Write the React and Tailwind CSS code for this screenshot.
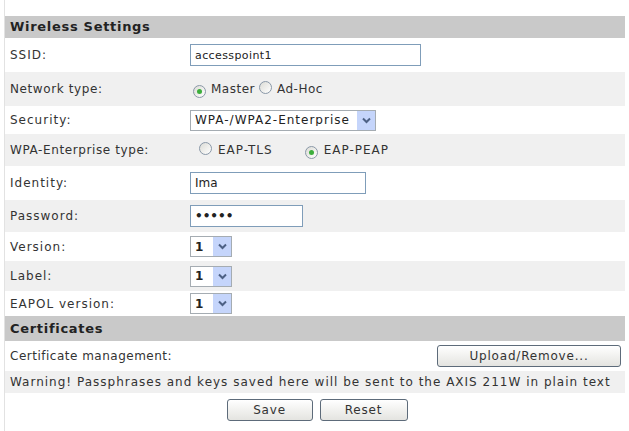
import React from "react";

const font = { fontFamily: '"DejaVu Sans", Verdana, sans-serif' };

function Radio({ checked }) {
  return (
    <span className="inline-flex items-center justify-center w-[13px] h-[13px] rounded-full border border-[#8a98a8] bg-gradient-to-br from-[#dcdcd6] to-white">
      {checked && <span className="w-[5px] h-[5px] rounded-full bg-[#3cae3c]" />}
    </span>
  );
}

function Select({ value, w, small }) {
  return (
    <div className={`flex items-center h-[21px] border border-[#a5acb2] bg-white ${w}`}>
      <span className={`flex-1 pl-[4px] text-[12px] text-[#222] leading-none whitespace-nowrap overflow-hidden ${small ? "font-bold" : "tracking-[1px]"}`}>{value}</span>
      <span className="w-[18px] h-[19px] bg-[#c5d5fb] flex items-center justify-center">
        <svg width="9" height="7" viewBox="0 0 9 7">
          <path d="M1 1.5 L4.5 5 L8 1.5" fill="none" stroke="#4d6185" strokeWidth="2" />
        </svg>
      </span>
    </div>
  );
}

function Input({ value, w, cls }) {
  return (
    <div className={`flex items-center h-[22px] border border-[#7f9db9] bg-white pl-[4px] ${w}`}>
      <span className={`text-[#222] leading-none ${cls}`}>{value}</span>
    </div>
  );
}

function Row({ label, children, gray, h, lcls = "tracking-[1px]" }) {
  return (
    <div className={`flex items-center ${h} ${gray ? "bg-[#f0f0f0]" : "bg-white"}`}>
      <div className={`w-[185px] pl-[5px] text-[12px] text-[#333] whitespace-nowrap ${lcls}`}>{label}</div>
      <div className="flex items-center">{children}</div>
    </div>
  );
}

function Btn({ children, w }) {
  return (
    <div className={`h-[22px] ${w} flex items-center justify-center rounded-[3px] border border-[#5d6b7a] bg-gradient-to-b from-white to-[#e4e4e0] text-[12px] tracking-[0.8px] text-[#333]`}>
      {children}
    </div>
  );
}

export default function App() {
  return (
    <div className="w-[629px] h-[431px] bg-white overflow-hidden" style={font}>
      <div className="ml-[4px] mr-[4px] border-l border-[#e2e2e2] pt-[16px] h-full">
        <div className="bg-[#c9c9c9] h-[22px] flex items-center pl-[5px] text-[13px] tracking-[0.7px] font-bold text-[#222]">
          Wireless Settings
        </div>
        <Row label="SSID:" h="h-[34px]">
          <Input value="accesspoint1" w="w-[231px]" cls="text-[11px] tracking-[0.4px] text-[#111]" />
        </Row>
        <Row label="Network type:" gray h="h-[34px]" lcls="text-[11px] tracking-[0.6px] text-[#222]">
          <span className="ml-[3px]"><Radio checked /></span>
          <span className="ml-[5px] text-[12px] tracking-[0.5px] text-[#333]">Master</span>
          <span className="ml-[4px]"><Radio /></span>
          <span className="ml-[5px] text-[12px] tracking-[0.5px] text-[#333]">Ad-Hoc</span>
        </Row>
        <Row label="Security:" h="h-[28px]">
          <Select value="WPA-/WPA2-Enterprise" w="w-[186px]" />
        </Row>
        <Row label="WPA-Enterprise type:" gray h="h-[32px]" lcls="tracking-[0.6px]">
          <span className="ml-[9px]"><Radio /></span>
          <span className="ml-[6px] text-[12px] tracking-[1px] text-[#333]">EAP-TLS</span>
          <span className="ml-[32px]"><Radio checked /></span>
          <span className="ml-[6px] text-[12px] tracking-[1px] text-[#333]">EAP-PEAP</span>
        </Row>
        <Row label="Identity:" h="h-[34px]">
          <Input value="Ima" w="w-[176px]" cls="text-[12px]" />
        </Row>
        <Row label="Password:" gray h="h-[32px]">
          <Input value="•••••" w="w-[113px]" cls="text-[12px] font-bold" />
        </Row>
        <Row label="Version:" h="h-[29px]">
          <Select value="1" w="w-[42px]" small />
        </Row>
        <Row label="Label:" gray h="h-[30px]">
          <Select value="1" w="w-[42px]" small />
        </Row>
        <Row label="EAPOL version:" h="h-[25px]">
          <Select value="1" w="w-[42px]" small />
        </Row>
        <div className="bg-[#c9c9c9] h-[25px] flex items-center pl-[5px] text-[13px] tracking-[0.7px] font-bold text-[#222]">
          Certificates
        </div>
        <div className="flex items-center justify-between h-[30px] pl-[5px] pr-[4px]">
          <span className="text-[12px] tracking-[0.5px] text-[#333]">Certificate management:</span>
          <Btn w="w-[184px]">Upload/Remove...</Btn>
        </div>
        <div className="flex items-center h-[22px] pl-[5px] bg-[#f0f0f0] text-[12px] tracking-[1px] text-[#333] whitespace-nowrap">
          Warning! Passphrases and keys saved here will be sent to the AXIS 211W in plain text
        </div>
        <div className="flex items-center justify-center gap-[7px] h-[34px] pl-[4px]">
          <Btn w="w-[86px]">Save</Btn>
          <Btn w="w-[88px]">Reset</Btn>
        </div>
      </div>
    </div>
  );
}
